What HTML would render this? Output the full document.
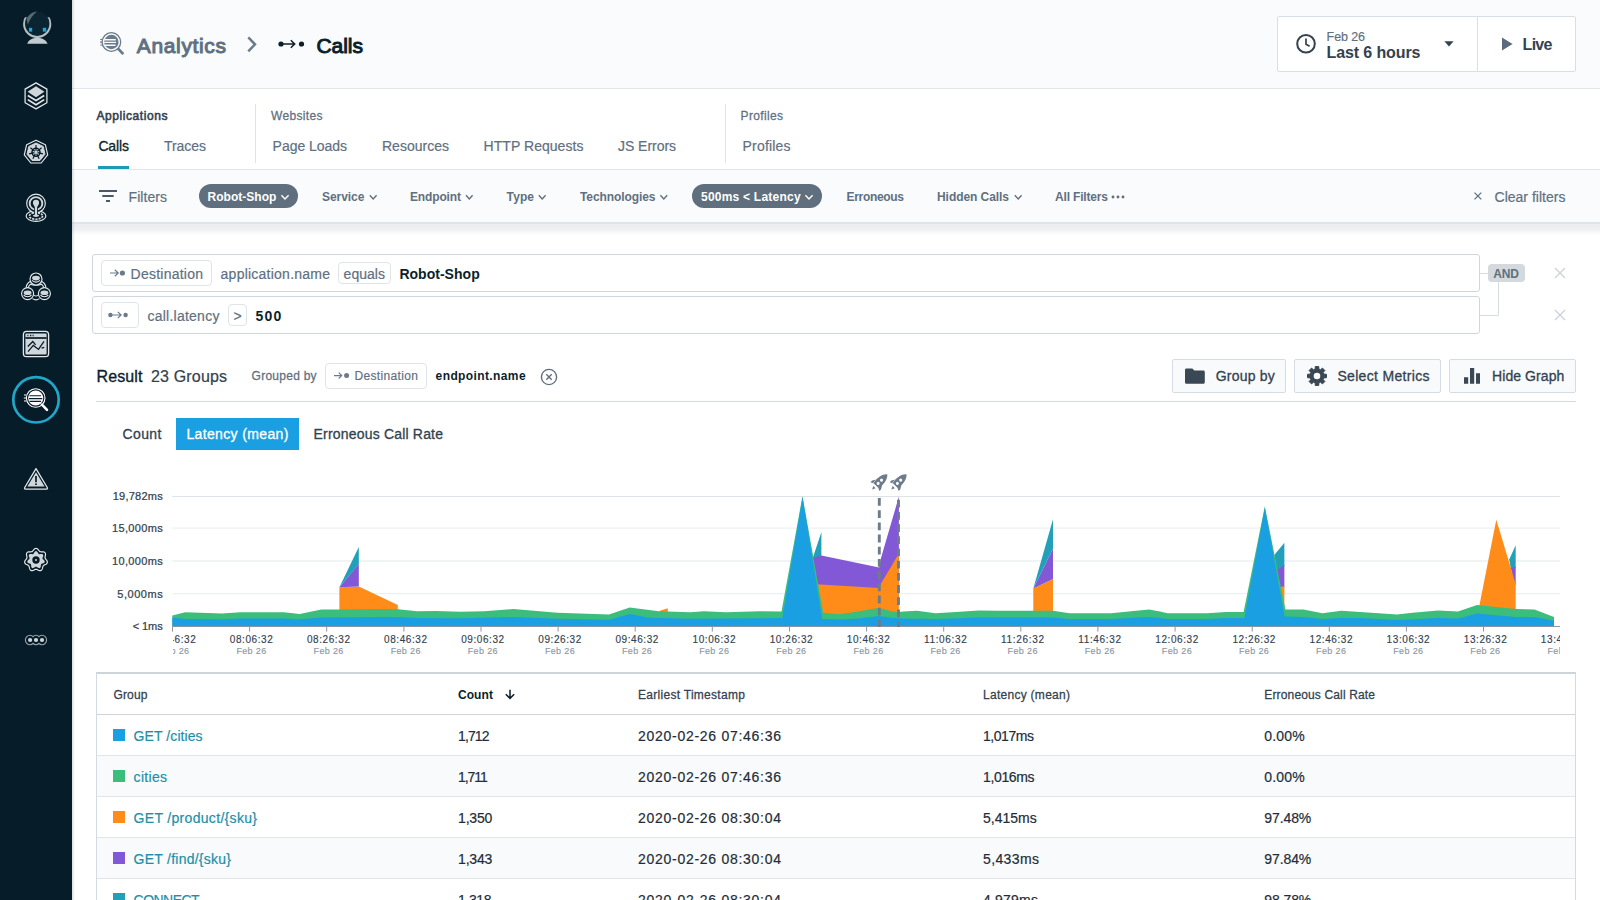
<!DOCTYPE html>
<html lang="en"><head><meta charset="utf-8"><title>Analytics - Calls</title>
<style>
html,body{margin:0;padding:0}
body{width:1600px;height:900px;overflow:hidden;position:relative;background:#fff;font-family:"Liberation Sans",Arial,sans-serif;}
.t{position:absolute;white-space:nowrap;}
.b{position:absolute;box-sizing:border-box;}
svg{position:absolute;overflow:visible}
</style></head><body>

<div class="b" style="left:72px;top:0;width:1528px;height:88px;background:#fafbfc;border-bottom:1px solid #e1e6ea;height:89px"></div>
<div class="b" style="left:72px;top:89px;width:1528px;height:81px;background:#fff;border-bottom:1px solid #e1e6ea"></div>
<div class="b" style="left:72px;top:224px;width:1528px;height:11px;background:linear-gradient(#eaedf0 0%,#eef0f2 50%,#fff 100%)"></div>
<div class="b" style="left:72px;top:170px;width:1528px;height:54px;background:#fafbfc;border-bottom:2px solid #dfe4e8"></div>
<div class="b" style="left:72px;top:0;width:3px;height:900px;background:linear-gradient(90deg,rgba(120,135,145,.28),rgba(120,135,145,0))"></div>
<div class="b" id="sidebar" style="left:0;top:0;width:72px;height:900px;background:#061d29"></div>
<svg style="left:0;top:0" width="72" height="900" viewBox="0 0 72 900">
<g>
<clipPath id="rc"><rect x="20" y="17.3" width="34" height="24"/></clipPath>
<circle cx="37.2" cy="24.100" r="14.100" fill="#b4bec5" clip-path="url(#rc)"/>
<circle cx="37.2" cy="23.700" r="12.200" fill="#0b2431"/>
<path d="M26.6 19C28.6 14.6 32.6 12 37 11.6C33 14.5 30.5 18.5 27.8 24.5Z" fill="#7b8993" opacity=".7"/>
<path d="M27.2 43.8C28.5 39.8 32 37.9 37.3 37.9C42.6 37.9 46 39.8 47.6 43.8Z" fill="#c3cbd0"/>
<rect x="29" y="27.8" width="3.2" height="3.8" fill="#1fa7d6"/><rect x="42.8" y="27.8" width="3.4" height="3.8" fill="#1fa7d6"/>
</g>
<g fill="none" stroke="#e3e8eb" stroke-width="1.25" stroke-linejoin="round">
<path d="M36 82.9L46.9 89.1V102.7L36 108.9L25.1 102.7V89.1Z"/>
<path d="M36 86.3L44.4 91.7L36 97.2L27.6 91.7Z" fill="#d0d6da" stroke="none"/>
<path d="M27.8 95.6L36 100.6L44.2 95.6" stroke-width="1.7"/>
<path d="M27.8 99.6L36 104.7L44.2 99.6" stroke-width="1.7"/>
</g>
<path d="M36.00 140.20 L45.38 144.72 L47.70 154.87 L41.21 163.01 L30.79 163.01 L24.30 154.87 L26.62 144.72Z" fill="none" stroke="#e3e8eb" stroke-width="1.15" stroke-linejoin="round"/>
<path d="M36.00 143.00 L43.19 146.46 L44.97 154.25 L39.99 160.49 L32.01 160.49 L27.03 154.25 L28.81 146.46Z" fill="#d0d6da" stroke="#d0d6da" stroke-width="1" stroke-linejoin="round"/>
<g stroke="#061d29" fill="none">
<circle cx="36" cy="152.3" r="4" stroke-width="1.5"/>
<path d="M36.00 150.70L36.00 145.10" stroke-width="1.2"/>
<path d="M37.25 151.30L41.63 147.81" stroke-width="1.2"/>
<path d="M37.56 152.66L43.02 153.90" stroke-width="1.2"/>
<path d="M36.69 153.74L39.12 158.79" stroke-width="1.2"/>
<path d="M35.31 153.74L32.88 158.79" stroke-width="1.2"/>
<path d="M34.44 152.66L28.98 153.90" stroke-width="1.2"/>
<path d="M34.75 151.30L30.37 147.81" stroke-width="1.2"/>
</g>
<g fill="none" stroke="#e3e8eb">
<ellipse cx="36" cy="216" rx="9.9" ry="5.4" stroke-width="1.15"/>
<ellipse cx="36" cy="216" rx="6.6" ry="3.3" stroke-width="1.7" stroke="#d0d6da" stroke-dasharray="2.2 1"/>
<circle cx="36" cy="203.4" r="9.3" stroke-width="1.15" fill="#061d29"/>
<circle cx="36" cy="203.4" r="6.3" stroke-width="1.9" stroke="#d0d6da"/>
<path d="M36 199.8a3.1 3.1 0 0 1 3.1 3.1c0 1.6-1.3 2.6-1.9 4.2L37 214.6c1.2.2 2 .6 2 1.1c0 .7-1.3 1.2-3 1.2s-3-.5-3-1.2c0-.5.8-.9 2-1.1L34.800 207.100c-.6-1.600-1.900-2.600-1.900-4.200a3.1 3.100 0 0 1 3.100-3.100z" fill="#d0d6da" stroke="#061d29" stroke-width="1.6" paint-order="stroke"/>
</g>
<g fill="none" stroke="#e3e8eb" stroke-width="1.15">
<path d="M30.2 281.5C27.5 283 26.3 284.5 26.2 287.6M41.8 281.5C44.5 283 45.7 284.5 45.8 287.6M32.5 298.6C34.5 300 37.5 300 39.5 298.6"/>
<path d="M30.5 284.2C33 285.6 39 285.6 41.5 284.2C44 286 43.6 288 43.3 288.4C41 289.5 39.2 291.5 38.800 294.500C37.500 296.500 34.500 296.500 33.200 294.500C32.800 291.500 31 289.500 28.700 288.400C28.400 288 28 286 30.500 284.200Z" stroke-width="1.1"/>
<circle cx="36" cy="279" r="6" fill="#061d29"/>
<ellipse cx="36" cy="278.1" rx="3.9" ry="2.3" fill="#d0d6da" stroke="none"/>
<path d="M32.1 280.3c1.5 2.4 6.300 2.400 7.800 0" stroke-width="1.1"/>
<circle cx="27.6" cy="293.6" r="6" fill="#061d29"/>
<ellipse cx="27.6" cy="292.7" rx="3.9" ry="2.3" fill="#d0d6da" stroke="none"/>
<path d="M23.7 294.9c1.5 2.4 6.300 2.400 7.800 0" stroke-width="1.1"/>
<circle cx="44.4" cy="293.6" r="6" fill="#061d29"/>
<ellipse cx="44.4" cy="292.7" rx="3.9" ry="2.3" fill="#d0d6da" stroke="none"/>
<path d="M40.5 294.9c1.5 2.4 6.300 2.400 7.800 0" stroke-width="1.1"/>
</g>
<rect x="23.4" y="331.4" width="25.2" height="25.2" rx="3.2" fill="none" stroke="#e3e8eb" stroke-width="1.3"/>
<rect x="25.4" y="333.4" width="21.2" height="21.200" rx="1" fill="#d0d6da"/>
<g stroke="#061d29" fill="none"><path d="M25.4 338H46.6" stroke-width="1.7"/><path d="M27.4 335.500h1M30 335.500h1.300M32.600 335.500h1" stroke-width="1.300"/><path d="M28 351.700L33.300 345.400L38.500 349.400L44 341.300" stroke-width="1.300"/><path d="M27.800 346.500L32.800 341.500L35.600 344.800" stroke-width="1.300"/><path d="M41.600 348.200L44.200 347.400" stroke-width="1.400"/></g>
<circle cx="36" cy="399.8" r="22.7" fill="none" stroke="#21a5c8" stroke-width="2.7"/>
<g><circle cx="35.700" cy="398" r="9.300" fill="none" stroke="#fff" stroke-width="1.100"/><circle cx="35.700" cy="398" r="7.600" fill="#fff"/>
<path d="M29.500 395.700H41M29 398.600H42.300M29.500 401.300H41" stroke="#061d29" stroke-width="1.150"/>
<path d="M24 395H26.200M23.800 398H26M24 401H26.200" stroke="#fff" stroke-width="1"/>
<path d="M42 404.700L47 409.800" stroke="#fff" stroke-width="2.600" stroke-linecap="round"/></g>
<path d="M36 468.600L47.400 487.800C47.700 488.400 47.300 489 46.700 489H25.300C24.700 489 24.300 488.400 24.600 487.800Z" fill="none" stroke="#e3e8eb" stroke-width="1.250" stroke-linejoin="round"/>
<path d="M36 472.300L44.600 486.600H27.400Z" fill="#d0d6da"/>
<path d="M36 476V482.200M36 483.600V485" stroke="#061d29" stroke-width="1.700"/>
<path d="M36.00 548.40L36.65 548.51L37.26 548.81L37.82 549.26L38.33 549.81L38.77 550.38L39.18 550.90L39.59 551.33L40.04 551.62L40.54 551.78L41.13 551.84L41.79 551.84L42.52 551.83L43.26 551.88L43.96 552.04L44.58 552.33L45.07 552.77L45.39 553.34L45.54 554.01L45.53 554.73L45.42 555.47L45.25 556.17L45.10 556.82L45.02 557.40L45.07 557.93L45.25 558.43L45.58 558.92L45.99 559.44L46.45 560.00L46.87 560.61L47.19 561.26L47.35 561.93L47.31 562.58L47.06 563.19L46.63 563.72L46.06 564.17L45.42 564.53L44.76 564.84L44.16 565.13L43.66 565.43L43.27 565.80L43.00 566.26L42.81 566.81L42.67 567.46L42.52 568.17L42.30 568.88L41.99 569.54L41.57 570.08L41.03 570.45L40.41 570.64L39.72 570.63L39.01 570.46L38.33 570.19L37.68 569.87L37.08 569.58L36.53 569.37L36.00 569.30L35.47 569.37L34.92 569.58L34.32 569.87L33.67 570.19L32.99 570.46L32.28 570.63L31.59 570.64L30.97 570.45L30.43 570.08L30.01 569.54L29.70 568.88L29.48 568.17L29.33 567.46L29.19 566.81L29.00 566.26L28.73 565.80L28.34 565.43L27.84 565.13L27.24 564.84L26.58 564.53L25.94 564.17L25.37 563.72L24.94 563.19L24.69 562.58L24.65 561.93L24.81 561.26L25.13 560.61L25.55 560.00L26.01 559.44L26.42 558.92L26.75 558.43L26.93 557.93L26.98 557.40L26.90 556.82L26.75 556.17L26.58 555.47L26.47 554.73L26.46 554.01L26.61 553.34L26.93 552.77L27.42 552.33L28.04 552.04L28.74 551.88L29.48 551.83L30.21 551.84L30.87 551.84L31.46 551.78L31.96 551.62L32.41 551.33L32.82 550.90L33.23 550.38L33.67 549.81L34.18 549.26L34.74 548.81L35.35 548.51Z" fill="none" stroke="#e3e8eb" stroke-width="1.150"/>
<path d="M36.00 551.10L36.49 551.20L36.96 551.49L37.37 551.93L37.72 552.44L38.02 552.98L38.29 553.45L38.56 553.82L38.86 554.05L39.23 554.15L39.69 554.13L40.23 554.04L40.83 553.94L41.46 553.89L42.06 553.94L42.57 554.13L42.96 554.45L43.19 554.90L43.25 555.44L43.17 556.04L42.98 556.64L42.75 557.20L42.55 557.71L42.43 558.15L42.43 558.53L42.59 558.88L42.89 559.22L43.30 559.59L43.75 560.00L44.18 560.46L44.51 560.96L44.69 561.48L44.68 561.98L44.47 562.44L44.08 562.83L43.57 563.13L42.98 563.36L42.40 563.54L41.87 563.69L41.45 563.87L41.16 564.12L40.99 564.46L40.91 564.91L40.87 565.45L40.83 566.06L40.74 566.68L40.56 567.25L40.26 567.71L39.86 568.02L39.37 568.14L38.83 568.08L38.27 567.87L37.72 567.56L37.22 567.21L36.78 566.89L36.37 566.68L36.00 566.60L35.63 566.68L35.22 566.89L34.78 567.21L34.28 567.56L33.73 567.87L33.17 568.08L32.63 568.14L32.14 568.02L31.74 567.71L31.44 567.25L31.26 566.68L31.17 566.06L31.13 565.45L31.09 564.91L31.01 564.46L30.84 564.12L30.55 563.87L30.13 563.69L29.60 563.54L29.02 563.36L28.43 563.13L27.92 562.83L27.53 562.44L27.32 561.98L27.31 561.48L27.49 560.96L27.82 560.46L28.25 560.00L28.70 559.59L29.11 559.22L29.41 558.88L29.57 558.53L29.57 558.15L29.45 557.71L29.25 557.20L29.02 556.64L28.83 556.04L28.75 555.44L28.81 554.90L29.04 554.45L29.43 554.13L29.94 553.94L30.54 553.89L31.17 553.94L31.77 554.04L32.31 554.13L32.77 554.15L33.14 554.05L33.44 553.82L33.71 553.45L33.98 552.98L34.28 552.44L34.63 551.93L35.04 551.49L35.51 551.20Z" fill="#d0d6da"/>
<circle cx="36" cy="560" r="3.700" fill="#061d29"/><circle cx="36" cy="560" r="1" fill="#d0d6da"/>
<g fill="none" stroke="#9aa6ae" stroke-width="1.100"><path d="M30.100 635.300a4.700 4.700 0 1 0 0 9.400c1.300 0 2.300-.5 2.950-1.300c.65.800 1.650 1.300 2.950 1.300s2.300-.5 2.950-1.300c.65.800 1.650 1.300 2.950 1.300a4.700 4.700 0 1 0 0-9.400c-1.300 0-2.300.5-2.950 1.300c-.65-.8-1.650-1.300-2.950-1.300s-2.300.5-2.950 1.300c-.65-.8-1.650-1.300-2.950-1.300z"/></g>
<circle cx="30.1" cy="640" r="2.100" fill="#d0d6da"/>
<circle cx="36" cy="640" r="2.100" fill="#d0d6da"/>
<circle cx="42" cy="640" r="2.100" fill="#d0d6da"/>
</svg>
<span class="t" style="left:136.80px;top:35.00px;font-size:21px;line-height:21px;color:#5f7080;-webkit-text-stroke:0.99px #5f7080;letter-spacing:0.646px;">Analytics</span>
<span class="t" style="left:316.50px;top:35.00px;font-size:21px;line-height:21px;color:#0b1f2b;-webkit-text-stroke:0.99px #0b1f2b;letter-spacing:-0.069px;">Calls</span>
<div class="b" style="left:1277px;top:16px;width:299px;height:56px;background:#fff;border:1px solid #d9e0e5;border-radius:2px"></div>
<div class="b" style="left:1477px;top:17px;width:1px;height:54px;background:#d9e0e5"></div>
<svg style="left:0;top:0" width="1600" height="90" viewBox="0 0 1600 90">
<g><circle cx="111.400" cy="42" r="9.300" fill="none" stroke="#6b7b8a" stroke-width="1.300"/><circle cx="111.400" cy="42" r="7.200" fill="#6b7b8a"/>
<path d="M104.600 39.700H115.800M104.200 42.400H116M104.600 45.200H115.500" stroke="#f9fafb" stroke-width="1.400"/>
<path d="M100.200 39.500H102.600M100 42.200H102.400M100.200 45H102.600" stroke="#6b7b8a" stroke-width="1.200"/>
<path d="M117.700 48.300L123.300 54.100" stroke="#6b7b8a" stroke-width="2.800"/></g>
<path d="M248.300 37.300L255 44.300L248.300 51.300" fill="none" stroke="#6b7b8a" stroke-width="2.500"/>
<g stroke="#0b1f2b" fill="#0b1f2b"><circle cx="281" cy="44" r="2.600" stroke="none"/><circle cx="301.500" cy="44" r="2.600" stroke="none"/><path d="M283 44H294.500M290.800 40.300L294.700 44L290.800 47.700" fill="none" stroke-width="1.500"/></g>
<circle cx="1306" cy="43.700" r="8.800" fill="none" stroke="#33424f" stroke-width="2"/><path d="M1306 38.500V44.200L1309.600 46.300" fill="none" stroke="#33424f" stroke-width="1.700"/>
<path d="M1444.400 41.200H1453.600L1449 46.500Z" fill="#33424f"/>
<path d="M1502 37.600L1512.600 44.100L1502 50.600Z" fill="#5b6b7b"/>
</svg>
<span class="t" style="left:1326.60px;top:31.00px;font-size:12.5px;line-height:12.5px;color:#5f7080;-webkit-text-stroke:0.18px #5f7080;letter-spacing:-0.103px;">Feb 26</span>
<span class="t" style="left:1326.60px;top:45.00px;font-size:16px;line-height:16px;color:#33424f;font-weight:700;letter-spacing:-0.121px;">Last 6 hours</span>
<span class="t" style="left:1522.60px;top:37.00px;font-size:16px;line-height:16px;color:#33424f;font-weight:700;letter-spacing:-0.739px;">Live</span>
<span class="t" style="left:96.40px;top:110.00px;font-size:12px;line-height:12px;color:#33424f;-webkit-text-stroke:0.56px #33424f;letter-spacing:0.572px;">Applications</span>
<span class="t" style="left:271.00px;top:110.00px;font-size:12px;line-height:12px;color:#5f7080;-webkit-text-stroke:0.26px #5f7080;letter-spacing:0.324px;">Websites</span>
<span class="t" style="left:740.60px;top:110.00px;font-size:12px;line-height:12px;color:#5f7080;-webkit-text-stroke:0.26px #5f7080;letter-spacing:0.341px;">Profiles</span>
<div class="b" style="left:255px;top:104px;width:1px;height:59px;background:#dfe4e8"></div>
<div class="b" style="left:725px;top:104px;width:1px;height:59px;background:#dfe4e8"></div>
<span class="t" style="left:98.40px;top:139.00px;font-size:14px;line-height:14px;color:#0b1f2b;-webkit-text-stroke:0.31px #0b1f2b;letter-spacing:-0.129px;">Calls</span>
<span class="t" style="left:164.00px;top:139.00px;font-size:14px;line-height:14px;color:#5f7080;-webkit-text-stroke:0.20px #5f7080;letter-spacing:-0.053px;">Traces</span>
<span class="t" style="left:272.60px;top:139.00px;font-size:14px;line-height:14px;color:#5f7080;-webkit-text-stroke:0.20px #5f7080;letter-spacing:-0.037px;">Page Loads</span>
<span class="t" style="left:382.00px;top:139.00px;font-size:14px;line-height:14px;color:#5f7080;-webkit-text-stroke:0.20px #5f7080;letter-spacing:0.010px;">Resources</span>
<span class="t" style="left:483.60px;top:139.00px;font-size:14px;line-height:14px;color:#5f7080;-webkit-text-stroke:0.20px #5f7080;letter-spacing:0.039px;">HTTP Requests</span>
<span class="t" style="left:618.00px;top:139.00px;font-size:14px;line-height:14px;color:#5f7080;-webkit-text-stroke:0.20px #5f7080;letter-spacing:-0.042px;">JS Errors</span>
<span class="t" style="left:742.60px;top:139.00px;font-size:14px;line-height:14px;color:#5f7080;-webkit-text-stroke:0.20px #5f7080;letter-spacing:0.188px;">Profiles</span>
<div class="b" style="left:98px;top:166px;width:31px;height:3px;background:#1c9ab8"></div>
<span class="t" style="left:128.60px;top:190.00px;font-size:14px;line-height:14px;color:#5f7080;-webkit-text-stroke:0.20px #5f7080;letter-spacing:0.048px;">Filters</span>
<div class="b" style="left:199px;top:184px;width:99px;height:24px;border-radius:12px;background:#5f6f7e"></div>
<div class="b" style="left:692px;top:184px;width:130px;height:24px;border-radius:12px;background:#5f6f7e"></div>
<svg style="left:0;top:170px" width="1600" height="60" viewBox="0 170 1600 60">
<path d="M99 191H117M102.300 196H113.700M106 201H110" stroke="#4a5a68" stroke-width="1.800" fill="none"/>
<path d="M281.4 195.200L285.0 199L288.6 195.200" fill="none" stroke="#fff" stroke-width="1.400"/>
<path d="M805.4 195.200L809.0 199L812.6 195.200" fill="none" stroke="#fff" stroke-width="1.400"/>
<path d="M369.8 195.200L373.2 199L376.6 195.200" fill="none" stroke="#5f7080" stroke-width="1.400"/>
<path d="M466.0 195.200L469.3 199L472.6 195.200" fill="none" stroke="#5f7080" stroke-width="1.400"/>
<path d="M538.8 195.200L542.2 199L545.6 195.200" fill="none" stroke="#5f7080" stroke-width="1.400"/>
<path d="M660.4 195.200L663.8 199L667.2 195.200" fill="none" stroke="#5f7080" stroke-width="1.400"/>
<path d="M1014.8 195.200L1018.2 199L1021.6 195.200" fill="none" stroke="#5f7080" stroke-width="1.400"/>
<circle cx="1113" cy="197" r="1.450" fill="#5f7080"/>
<circle cx="1118" cy="197" r="1.450" fill="#5f7080"/>
<circle cx="1123" cy="197" r="1.450" fill="#5f7080"/>
<path d="M1474.500 192.600L1481.300 199.400M1481.300 192.600L1474.500 199.400" stroke="#5f7080" stroke-width="1.300"/>
</svg>
<span class="t" style="left:207.60px;top:191.00px;font-size:12px;line-height:12px;color:#fff;font-weight:700;letter-spacing:0.017px;">Robot-Shop</span>
<span class="t" style="left:701.00px;top:191.00px;font-size:12px;line-height:12px;color:#fff;font-weight:700;letter-spacing:0.229px;">500ms &lt; Latency</span>
<span class="t" style="left:322.00px;top:191.00px;font-size:12px;line-height:12px;color:#5f7080;font-weight:700;letter-spacing:-0.051px;">Service</span>
<span class="t" style="left:410.00px;top:191.00px;font-size:12px;line-height:12px;color:#5f7080;font-weight:700;letter-spacing:-0.141px;">Endpoint</span>
<span class="t" style="left:506.60px;top:191.00px;font-size:12px;line-height:12px;color:#5f7080;font-weight:700;letter-spacing:0.094px;">Type</span>
<span class="t" style="left:580.00px;top:191.00px;font-size:12px;line-height:12px;color:#5f7080;font-weight:700;letter-spacing:-0.096px;">Technologies</span>
<span class="t" style="left:846.60px;top:191.00px;font-size:12px;line-height:12px;color:#5f7080;font-weight:700;letter-spacing:-0.327px;">Erroneous</span>
<span class="t" style="left:937.00px;top:191.00px;font-size:12px;line-height:12px;color:#5f7080;font-weight:700;letter-spacing:-0.062px;">Hidden Calls</span>
<span class="t" style="left:1055.00px;top:191.00px;font-size:12px;line-height:12px;color:#5f7080;font-weight:700;letter-spacing:-0.168px;">All Filters</span>
<span class="t" style="left:1494.50px;top:190.00px;font-size:14px;line-height:14px;color:#5f7080;-webkit-text-stroke:0.20px #5f7080;letter-spacing:0.017px;">Clear filters</span>
<div class="b" style="left:92px;top:254px;width:1388px;height:38px;border:1px solid #cfd7dd;border-radius:3px;background:#fff"></div>
<div class="b" style="left:92px;top:296px;width:1388px;height:38px;border:1px solid #cfd7dd;border-radius:3px;background:#fff"></div>
<div class="b" style="left:101px;top:260px;width:111px;height:26px;border:1px solid #dfe4e8;border-radius:4px"></div>
<div class="b" style="left:338px;top:262px;width:53px;height:22px;border:1px solid #dfe4e8;border-radius:4px"></div>
<div class="b" style="left:101px;top:302px;width:38px;height:26px;border:1px solid #dfe4e8;border-radius:4px"></div>
<div class="b" style="left:228px;top:304px;width:19px;height:22px;border:1px solid #dfe4e8;border-radius:4px"></div>
<span class="t" style="left:130.60px;top:267.00px;font-size:14px;line-height:14px;color:#5f7080;-webkit-text-stroke:0.20px #5f7080;letter-spacing:0.236px;">Destination</span>
<span class="t" style="left:220.60px;top:267.00px;font-size:14px;line-height:14px;color:#5f7080;-webkit-text-stroke:0.20px #5f7080;letter-spacing:0.237px;">application.name</span>
<span class="t" style="left:343.60px;top:267.00px;font-size:14px;line-height:14px;color:#5f7080;-webkit-text-stroke:0.20px #5f7080;letter-spacing:0.029px;">equals</span>
<span class="t" style="left:399.40px;top:267.00px;font-size:14px;line-height:14px;color:#0b1f2b;font-weight:700;letter-spacing:0.024px;">Robot-Shop</span>
<span class="t" style="left:147.40px;top:309.00px;font-size:14px;line-height:14px;color:#5f7080;-webkit-text-stroke:0.20px #5f7080;letter-spacing:0.250px;">call.latency</span>
<span class="t" style="left:233.40px;top:309.00px;font-size:14px;line-height:14px;color:#5f7080;-webkit-text-stroke:0.20px #5f7080;">&gt;</span>
<span class="t" style="left:255.40px;top:309.00px;font-size:14px;line-height:14px;color:#0b1f2b;font-weight:700;letter-spacing:1.321px;">500</span>
<div class="b" style="left:1488px;top:264px;width:37px;height:18px;border-radius:4px;background:#d3d9dd"></div>
<span class="t" style="left:1493.30px;top:268.00px;font-size:12px;line-height:12px;color:#5f7080;font-weight:700;letter-spacing:-0.149px;">AND</span>
<svg style="left:0;top:250px" width="1600" height="90" viewBox="0 250 1600 90">
<g stroke="#6b7b8a" fill="none" stroke-width="1.200"><path d="M110.0 273.0H118.0M114.8 269.8L118.2 273.0L114.8 276.2"/><circle cx="122.4" cy="273.0" r="2.600" fill="#6b7b8a" stroke="none"/></g>
<g stroke="#6b7b8a" fill="#6b7b8a"><circle cx="110.400" cy="315" r="2.200" stroke="none"/><circle cx="125.600" cy="315" r="2.200" stroke="none"/><path d="M112 315H121M117.800 311.900L121.100 315L117.800 318.100" fill="none" stroke-width="1.200"/></g>
<path d="M1480 273.500H1488M1498.500 282V315.500H1480" fill="none" stroke="#d5dde3" stroke-width="1"/>
<path d="M1555 268L1565 278M1565 268L1555 278" stroke="#cbd2d8" stroke-width="1.300"/>
<path d="M1555 310L1565 320M1565 310L1555 320" stroke="#cbd2d8" stroke-width="1.300"/>
</svg>
<span class="t" style="left:96.60px;top:369.00px;font-size:16px;line-height:16px;color:#0b1f2b;-webkit-text-stroke:0.35px #0b1f2b;letter-spacing:0.090px;">Result</span>
<span class="t" style="left:151.00px;top:369.00px;font-size:16px;line-height:16px;color:#33424f;-webkit-text-stroke:0.22px #33424f;letter-spacing:0.161px;">23 Groups</span>
<span class="t" style="left:251.60px;top:370.00px;font-size:12px;line-height:12px;color:#5f7080;-webkit-text-stroke:0.26px #5f7080;letter-spacing:0.255px;">Grouped by</span>
<div class="b" style="left:325px;top:363px;width:102px;height:26px;border:1px solid #dfe4e8;border-radius:4px"></div>
<span class="t" style="left:354.40px;top:370.00px;font-size:12px;line-height:12px;color:#5f7080;-webkit-text-stroke:0.17px #5f7080;letter-spacing:0.356px;">Destination</span>
<span class="t" style="left:435.60px;top:370.00px;font-size:12px;line-height:12px;color:#0b1f2b;font-weight:700;letter-spacing:0.389px;">endpoint.name</span>
<div class="b" style="left:1172px;top:359px;width:114px;height:34px;border:1px solid #d5dde3;border-radius:2px;background:#f9fafb"></div>
<div class="b" style="left:1294px;top:359px;width:147px;height:34px;border:1px solid #d5dde3;border-radius:2px;background:#f9fafb"></div>
<div class="b" style="left:1449px;top:359px;width:127px;height:34px;border:1px solid #d5dde3;border-radius:2px;background:#f9fafb"></div>
<span class="t" style="left:1215.80px;top:369.00px;font-size:14px;line-height:14px;color:#33424f;-webkit-text-stroke:0.31px #33424f;letter-spacing:0.188px;">Group by</span>
<span class="t" style="left:1337.40px;top:369.00px;font-size:14px;line-height:14px;color:#33424f;-webkit-text-stroke:0.31px #33424f;letter-spacing:0.322px;">Select Metrics</span>
<span class="t" style="left:1492.00px;top:369.00px;font-size:14px;line-height:14px;color:#33424f;-webkit-text-stroke:0.31px #33424f;letter-spacing:0.079px;">Hide Graph</span>
<div class="b" style="left:96px;top:401px;width:1480px;height:1px;background:#d3dbe0"></div>
<svg style="left:0;top:355px" width="1600" height="45" viewBox="0 355 1600 45">
<g stroke="#6b7b8a" fill="none" stroke-width="1.150"><path d="M334 375.600H341.600M338.700 372.700L341.800 375.600L338.700 378.500"/><circle cx="346.600" cy="375.600" r="2.500" fill="#6b7b8a" stroke="none"/></g>
<circle cx="549" cy="377" r="7.600" fill="none" stroke="#5f7080" stroke-width="1.400"/><path d="M546.300 374.300L551.700 379.700M551.700 374.300L546.300 379.700" stroke="#5f7080" stroke-width="1.400"/>
<path d="M1186.500 368.400H1192.300L1194.300 370.400H1203.300C1204.200 370.400 1204.800 371 1204.800 371.900V382.300C1204.800 383.200 1204.200 383.800 1203.300 383.800H1186.500C1185.600 383.800 1185 383.200 1185 382.300V369.900C1185 369 1185.600 368.400 1186.500 368.400Z" fill="#3a4754"/>
<path d="M1315.28 366.56L1318.72 366.56L1318.87 369.15L1320.52 369.83L1322.46 368.10L1324.90 370.54L1323.17 372.48L1323.85 374.13L1326.44 374.28L1326.44 377.72L1323.85 377.87L1323.17 379.52L1324.90 381.46L1322.46 383.90L1320.52 382.17L1318.87 382.85L1318.72 385.44L1315.28 385.44L1315.13 382.85L1313.48 382.17L1311.54 383.90L1309.10 381.46L1310.83 379.52L1310.15 377.87L1307.56 377.72L1307.56 374.28L1310.15 374.13L1310.83 372.48L1309.10 370.54L1311.54 368.10L1313.48 369.83L1315.13 369.15Z" fill="#3a4754" stroke="#3a4754" stroke-width="1" stroke-linejoin="round"/><circle cx="1317" cy="376" r="3.300" fill="#f9fafb"/>
<path d="M1464 377.300H1468.200V383.800H1464ZM1470 367.900H1474.200V383.800H1470ZM1476 373.300H1480V383.800H1476Z" fill="#3a4754"/>
</svg>
<div class="b" style="left:176px;top:418px;width:123px;height:32px;background:#1a9fe3"></div>
<span class="t" style="left:122.60px;top:427.00px;font-size:14px;line-height:14px;color:#33424f;-webkit-text-stroke:0.31px #33424f;letter-spacing:0.360px;">Count</span>
<span class="t" style="left:186.40px;top:427.00px;font-size:14px;line-height:14px;color:#fff;-webkit-text-stroke:0.31px #fff;letter-spacing:0.364px;">Latency (mean)</span>
<span class="t" style="left:313.60px;top:427.00px;font-size:14px;line-height:14px;color:#33424f;-webkit-text-stroke:0.31px #33424f;letter-spacing:0.185px;">Erroneous Call Rate</span>
<svg style="left:0;top:465px" width="1600" height="175" viewBox="0 465 1600 175">
<path d="M172.300 496.500H1560" stroke="#dde3e8" stroke-width="1.200"/>
<path d="M172.300 528.2H1560" stroke="#edf0f2" stroke-width="1.300"/>
<path d="M172.300 561H1560" stroke="#edf0f2" stroke-width="1.300"/>
<path d="M172.300 593.7H1560" stroke="#edf0f2" stroke-width="1.300"/>
<path d="M339.4 611.0L339.4 587.3L358.8 586.5L397.8 605.0L397.8 611.0 Z" fill="#ff8b19"/>
<path d="M339.4 587.3L358.8 563.8L358.8 586.6 Z" fill="#8258d7"/>
<path d="M339.4 587.3L358.8 547.0L358.8 563.9 Z" fill="#23a0b9"/>
<path d="M659.7 612.5L659.7 610.7L667.8 608.3L667.8 612.5 Z" fill="#ff8b19"/>
<path d="M806.0 560.0L812.9 557.5L821.4 532.0L821.4 556.5L806.0 561.0 Z" fill="#23a0b9"/>
<path d="M808.0 558.6L812.5 558.0L821.4 555.6L879.2 567.5L881.0 558.0L898.9 496.6L898.9 600.0L808.0 600.0 Z" fill="#8258d7"/>
<path d="M808.0 584.2L816.5 584.2L879.2 588.0L881.0 583.6L898.9 553.4L898.9 614.0L808.0 616.0 Z" fill="#ff8b19"/>
<path d="M1033.3 612.0L1033.3 588.5L1053.0 579.0L1053.0 612.0 Z" fill="#ff8b19"/>
<path d="M1033.3 588.5L1053.0 548.5L1053.0 579.1 Z" fill="#8258d7"/>
<path d="M1033.3 588.5L1053.0 519.2L1053.0 548.6 Z" fill="#23a0b9"/>
<path d="M1274.3 555.0L1284.4 542.8L1284.4 566.0L1277.0 572.0 Z" fill="#23a0b9"/>
<path d="M1276.5 570.5L1284.4 565.0L1284.4 587.0L1280.0 589.0 Z" fill="#8258d7"/>
<path d="M1279.5 587.5L1284.4 586.0L1284.4 606.0L1282.0 606.0 Z" fill="#ff8b19"/>
<path d="M1509.2 559.4L1515.7 545.3L1515.7 568.0L1511.0 570.0 Z" fill="#23a0b9"/>
<path d="M1511.0 567.8L1515.7 567.0L1515.7 585.0L1514.0 585.0 Z" fill="#8258d7"/>
<path d="M1479.3 606.0L1496.3 519.8L1515.7 584.0L1515.7 611.0L1479.3 611.0 Z" fill="#ff8b19"/>
<path d="M172.3 626.3L172.3 615.4L185.3 612.2L221.9 613.5L240.6 612.2L283.8 612.2L299.7 613.9L321.3 609.4L339.0 609.4L381.0 609.0L398.0 609.2L417.0 611.3L435.6 611.0L460.0 611.7L484.4 611.3L513.4 609.0L557.5 612.8L609.0 614.6L629.7 607.5L658.8 611.2L690.6 612.2L703.8 611.2L726.0 612.2L760.0 611.3L781.5 611.4L802.5 496.0L823.2 612.7L839.3 614.2L858.2 611.4L879.0 607.8L892.2 611.4L898.4 612.0L903.5 611.4L916.8 610.8L935.6 613.2L960.0 611.7L978.9 610.4L997.8 610.8L1033.0 610.8L1053.0 610.8L1069.5 613.2L1111.0 613.2L1148.9 609.5L1160.0 611.4L1167.5 613.2L1207.2 613.2L1226.0 612.0L1243.6 612.0L1264.8 506.3L1285.4 609.5L1303.5 609.5L1322.4 613.2L1341.3 610.8L1360.0 612.0L1397.0 614.5L1412.5 612.8L1438.0 610.4L1458.0 611.5L1477.0 605.0L1496.0 607.0L1515.6 609.0L1534.5 609.5L1554.0 617.0L1554.0 626.3Z" fill="#3bbd7c"/>
<path d="M172.3 626.3L172.3 617.8L185.3 619.0L221.9 619.3L240.6 618.5L283.8 618.4L299.7 619.3L321.3 617.4L381.0 617.0L398.0 617.0L417.0 618.0L460.0 618.3L513.4 616.9L557.5 618.8L609.0 619.7L629.7 614.0L649.4 617.8L690.6 618.8L760.0 618.3L782.3 618.0L802.5 497.2L822.3 619.0L839.3 619.5L858.2 618.5L879.0 616.0L892.2 618.0L903.5 618.4L935.6 619.0L960.0 618.2L978.9 617.6L1053.0 617.6L1069.5 619.0L1111.0 619.0L1148.9 617.0L1160.0 618.0L1167.5 619.0L1207.2 619.0L1226.0 618.0L1244.4 618.0L1264.8 507.8L1284.6 616.6L1303.5 617.0L1322.4 619.0L1341.3 618.0L1360.0 618.0L1397.0 619.9L1438.0 618.0L1458.0 618.5L1477.0 613.5L1515.6 617.0L1534.5 617.0L1554.0 620.8L1554.0 626.3Z" fill="#1a9fe3"/>
<path d="M172.300 626.500H1560" stroke="#8a97a3" stroke-width="1.100"/>
<path d="M172.5 626.500V631.600" stroke="#8a97a3" stroke-width="1"/>
<path d="M249.6 626.500V631.600" stroke="#8a97a3" stroke-width="1"/>
<path d="M326.7 626.500V631.600" stroke="#8a97a3" stroke-width="1"/>
<path d="M403.9 626.500V631.600" stroke="#8a97a3" stroke-width="1"/>
<path d="M481.0 626.500V631.600" stroke="#8a97a3" stroke-width="1"/>
<path d="M558.1 626.500V631.600" stroke="#8a97a3" stroke-width="1"/>
<path d="M635.2 626.500V631.600" stroke="#8a97a3" stroke-width="1"/>
<path d="M712.3 626.500V631.600" stroke="#8a97a3" stroke-width="1"/>
<path d="M789.5 626.500V631.600" stroke="#8a97a3" stroke-width="1"/>
<path d="M866.6 626.500V631.600" stroke="#8a97a3" stroke-width="1"/>
<path d="M943.7 626.500V631.600" stroke="#8a97a3" stroke-width="1"/>
<path d="M1020.8 626.500V631.600" stroke="#8a97a3" stroke-width="1"/>
<path d="M1097.9 626.500V631.600" stroke="#8a97a3" stroke-width="1"/>
<path d="M1175.1 626.500V631.600" stroke="#8a97a3" stroke-width="1"/>
<path d="M1252.2 626.500V631.600" stroke="#8a97a3" stroke-width="1"/>
<path d="M1329.3 626.500V631.600" stroke="#8a97a3" stroke-width="1"/>
<path d="M1406.4 626.500V631.600" stroke="#8a97a3" stroke-width="1"/>
<path d="M1483.5 626.500V631.600" stroke="#8a97a3" stroke-width="1"/>
<path d="M879.3 498.0V627" stroke="#6d7c8a" stroke-width="2.900" stroke-dasharray="7.800 4.400"/>
<g transform="translate(879.6 482) rotate(45)"><path d="M0 -10.900C3.700 -7.800 4.600 -2.500 4.100 5H-4.100C-4.600 -2.500 -3.700 -7.800 0 -10.900ZM4.100 0.500L6.300 4.300V6.600L3.600 5.300ZM-4.100 0.500L-6.300 4.300V6.600L-3.600 5.300ZM-1.700 7.200L0 10.600L1.700 7.200Z" fill="#6d7c8a"/><circle cx="0" cy="-2.700" r="1.500" fill="#fff"/><circle cx="0" cy="2" r="1.500" fill="#fff"/></g>
<path d="M898.5 499.7V627" stroke="#6d7c8a" stroke-width="2.900" stroke-dasharray="7.800 4.400"/>
<g transform="translate(898.8 482) rotate(45)"><path d="M0 -10.900C3.700 -7.800 4.600 -2.500 4.100 5H-4.100C-4.600 -2.500 -3.700 -7.800 0 -10.900ZM4.100 0.500L6.300 4.300V6.600L3.600 5.300ZM-4.100 0.500L-6.300 4.300V6.600L-3.600 5.300ZM-1.700 7.200L0 10.600L1.700 7.200Z" fill="#6d7c8a"/><circle cx="0" cy="-2.700" r="1.500" fill="#fff"/><circle cx="0" cy="2" r="1.500" fill="#fff"/></g>
</svg>
<span class="t" style="left:112.70px;top:491.00px;font-size:11px;line-height:11px;color:#33424f;-webkit-text-stroke:0.24px #33424f;letter-spacing:0.242px;">19,782ms</span>
<span class="t" style="left:112.00px;top:523.00px;font-size:11px;line-height:11px;color:#33424f;-webkit-text-stroke:0.24px #33424f;letter-spacing:0.342px;">15,000ms</span>
<span class="t" style="left:112.00px;top:556.00px;font-size:11px;line-height:11px;color:#33424f;-webkit-text-stroke:0.24px #33424f;letter-spacing:0.342px;">10,000ms</span>
<span class="t" style="left:117.30px;top:589.00px;font-size:11px;line-height:11px;color:#33424f;-webkit-text-stroke:0.24px #33424f;letter-spacing:0.535px;">5,000ms</span>
<span class="t" style="left:132.70px;top:621.00px;font-size:11px;line-height:11px;color:#33424f;-webkit-text-stroke:0.24px #33424f;letter-spacing:-0.065px;">&lt; 1ms</span>
<div class="b" style="left:172.5px;top:630px;width:1387.5px;height:30px;overflow:hidden">
<span class="t" style="left:-19.80px;top:5.00px;font-size:10px;line-height:10px;color:#33424f;-webkit-text-stroke:0.14px #33424f;letter-spacing:0.582px;">07:46:32</span>
<span class="t" style="left:-13.20px;top:17.00px;font-size:9px;line-height:9px;color:#8a97a3;-webkit-text-stroke:0.13px #8a97a3;letter-spacing:0.356px;">Feb 26</span>
<span class="t" style="left:57.32px;top:5.00px;font-size:10px;line-height:10px;color:#33424f;-webkit-text-stroke:0.14px #33424f;letter-spacing:0.582px;">08:06:32</span>
<span class="t" style="left:63.92px;top:17.00px;font-size:9px;line-height:9px;color:#8a97a3;-webkit-text-stroke:0.13px #8a97a3;letter-spacing:0.356px;">Feb 26</span>
<span class="t" style="left:134.44px;top:5.00px;font-size:10px;line-height:10px;color:#33424f;-webkit-text-stroke:0.14px #33424f;letter-spacing:0.582px;">08:26:32</span>
<span class="t" style="left:141.04px;top:17.00px;font-size:9px;line-height:9px;color:#8a97a3;-webkit-text-stroke:0.13px #8a97a3;letter-spacing:0.356px;">Feb 26</span>
<span class="t" style="left:211.56px;top:5.00px;font-size:10px;line-height:10px;color:#33424f;-webkit-text-stroke:0.14px #33424f;letter-spacing:0.582px;">08:46:32</span>
<span class="t" style="left:218.16px;top:17.00px;font-size:9px;line-height:9px;color:#8a97a3;-webkit-text-stroke:0.13px #8a97a3;letter-spacing:0.356px;">Feb 26</span>
<span class="t" style="left:288.68px;top:5.00px;font-size:10px;line-height:10px;color:#33424f;-webkit-text-stroke:0.14px #33424f;letter-spacing:0.582px;">09:06:32</span>
<span class="t" style="left:295.28px;top:17.00px;font-size:9px;line-height:9px;color:#8a97a3;-webkit-text-stroke:0.13px #8a97a3;letter-spacing:0.356px;">Feb 26</span>
<span class="t" style="left:365.80px;top:5.00px;font-size:10px;line-height:10px;color:#33424f;-webkit-text-stroke:0.14px #33424f;letter-spacing:0.582px;">09:26:32</span>
<span class="t" style="left:372.40px;top:17.00px;font-size:9px;line-height:9px;color:#8a97a3;-webkit-text-stroke:0.13px #8a97a3;letter-spacing:0.356px;">Feb 26</span>
<span class="t" style="left:442.92px;top:5.00px;font-size:10px;line-height:10px;color:#33424f;-webkit-text-stroke:0.14px #33424f;letter-spacing:0.582px;">09:46:32</span>
<span class="t" style="left:449.52px;top:17.00px;font-size:9px;line-height:9px;color:#8a97a3;-webkit-text-stroke:0.13px #8a97a3;letter-spacing:0.356px;">Feb 26</span>
<span class="t" style="left:520.04px;top:5.00px;font-size:10px;line-height:10px;color:#33424f;-webkit-text-stroke:0.14px #33424f;letter-spacing:0.582px;">10:06:32</span>
<span class="t" style="left:526.64px;top:17.00px;font-size:9px;line-height:9px;color:#8a97a3;-webkit-text-stroke:0.13px #8a97a3;letter-spacing:0.356px;">Feb 26</span>
<span class="t" style="left:597.16px;top:5.00px;font-size:10px;line-height:10px;color:#33424f;-webkit-text-stroke:0.14px #33424f;letter-spacing:0.582px;">10:26:32</span>
<span class="t" style="left:603.76px;top:17.00px;font-size:9px;line-height:9px;color:#8a97a3;-webkit-text-stroke:0.13px #8a97a3;letter-spacing:0.356px;">Feb 26</span>
<span class="t" style="left:674.28px;top:5.00px;font-size:10px;line-height:10px;color:#33424f;-webkit-text-stroke:0.14px #33424f;letter-spacing:0.582px;">10:46:32</span>
<span class="t" style="left:680.88px;top:17.00px;font-size:9px;line-height:9px;color:#8a97a3;-webkit-text-stroke:0.13px #8a97a3;letter-spacing:0.356px;">Feb 26</span>
<span class="t" style="left:751.40px;top:5.00px;font-size:10px;line-height:10px;color:#33424f;-webkit-text-stroke:0.14px #33424f;letter-spacing:0.688px;">11:06:32</span>
<span class="t" style="left:758.00px;top:17.00px;font-size:9px;line-height:9px;color:#8a97a3;-webkit-text-stroke:0.13px #8a97a3;letter-spacing:0.356px;">Feb 26</span>
<span class="t" style="left:828.52px;top:5.00px;font-size:10px;line-height:10px;color:#33424f;-webkit-text-stroke:0.14px #33424f;letter-spacing:0.688px;">11:26:32</span>
<span class="t" style="left:835.12px;top:17.00px;font-size:9px;line-height:9px;color:#8a97a3;-webkit-text-stroke:0.13px #8a97a3;letter-spacing:0.356px;">Feb 26</span>
<span class="t" style="left:905.64px;top:5.00px;font-size:10px;line-height:10px;color:#33424f;-webkit-text-stroke:0.14px #33424f;letter-spacing:0.688px;">11:46:32</span>
<span class="t" style="left:912.24px;top:17.00px;font-size:9px;line-height:9px;color:#8a97a3;-webkit-text-stroke:0.13px #8a97a3;letter-spacing:0.356px;">Feb 26</span>
<span class="t" style="left:982.76px;top:5.00px;font-size:10px;line-height:10px;color:#33424f;-webkit-text-stroke:0.14px #33424f;letter-spacing:0.582px;">12:06:32</span>
<span class="t" style="left:989.36px;top:17.00px;font-size:9px;line-height:9px;color:#8a97a3;-webkit-text-stroke:0.13px #8a97a3;letter-spacing:0.356px;">Feb 26</span>
<span class="t" style="left:1059.88px;top:5.00px;font-size:10px;line-height:10px;color:#33424f;-webkit-text-stroke:0.14px #33424f;letter-spacing:0.582px;">12:26:32</span>
<span class="t" style="left:1066.48px;top:17.00px;font-size:9px;line-height:9px;color:#8a97a3;-webkit-text-stroke:0.13px #8a97a3;letter-spacing:0.356px;">Feb 26</span>
<span class="t" style="left:1137.00px;top:5.00px;font-size:10px;line-height:10px;color:#33424f;-webkit-text-stroke:0.14px #33424f;letter-spacing:0.582px;">12:46:32</span>
<span class="t" style="left:1143.60px;top:17.00px;font-size:9px;line-height:9px;color:#8a97a3;-webkit-text-stroke:0.13px #8a97a3;letter-spacing:0.356px;">Feb 26</span>
<span class="t" style="left:1214.12px;top:5.00px;font-size:10px;line-height:10px;color:#33424f;-webkit-text-stroke:0.14px #33424f;letter-spacing:0.582px;">13:06:32</span>
<span class="t" style="left:1220.72px;top:17.00px;font-size:9px;line-height:9px;color:#8a97a3;-webkit-text-stroke:0.13px #8a97a3;letter-spacing:0.356px;">Feb 26</span>
<span class="t" style="left:1291.24px;top:5.00px;font-size:10px;line-height:10px;color:#33424f;-webkit-text-stroke:0.14px #33424f;letter-spacing:0.582px;">13:26:32</span>
<span class="t" style="left:1297.84px;top:17.00px;font-size:9px;line-height:9px;color:#8a97a3;-webkit-text-stroke:0.13px #8a97a3;letter-spacing:0.356px;">Feb 26</span>
<span class="t" style="left:1368.36px;top:5.00px;font-size:10px;line-height:10px;color:#33424f;-webkit-text-stroke:0.14px #33424f;letter-spacing:0.582px;">13:46:32</span>
<span class="t" style="left:1374.96px;top:17.00px;font-size:9px;line-height:9px;color:#8a97a3;-webkit-text-stroke:0.13px #8a97a3;letter-spacing:0.356px;">Feb 26</span>
</div>
<div class="b" style="left:96px;top:672px;width:1480px;height:240px;border:1px solid #d3dbe0;border-top:2px solid #cdd5db;background:#fff"></div>
<div class="b" style="left:97px;top:714px;width:1478px;height:1px;background:#cdd5db"></div>
<div class="b" style="left:97px;top:755px;width:1478px;height:1px;background:#e1e6ea"></div>
<div class="b" style="left:97px;top:756px;width:1478px;height:40px;background:#f9fafb"></div>
<div class="b" style="left:97px;top:796px;width:1478px;height:1px;background:#e1e6ea"></div>
<div class="b" style="left:97px;top:837px;width:1478px;height:1px;background:#e1e6ea"></div>
<div class="b" style="left:97px;top:838px;width:1478px;height:40px;background:#f9fafb"></div>
<div class="b" style="left:97px;top:878px;width:1478px;height:1px;background:#e1e6ea"></div>
<div class="b" style="left:97px;top:919px;width:1478px;height:1px;background:#e1e6ea"></div>
<span class="t" style="left:113.40px;top:689.00px;font-size:12px;line-height:12px;color:#33424f;-webkit-text-stroke:0.26px #33424f;letter-spacing:0.162px;">Group</span>
<span class="t" style="left:458.00px;top:689.00px;font-size:12px;line-height:12px;color:#0b1f2b;font-weight:700;letter-spacing:0.062px;">Count</span>
<span class="t" style="left:638.00px;top:689.00px;font-size:12px;line-height:12px;color:#33424f;-webkit-text-stroke:0.26px #33424f;letter-spacing:0.286px;">Earliest Timestamp</span>
<span class="t" style="left:983.00px;top:689.00px;font-size:12px;line-height:12px;color:#33424f;-webkit-text-stroke:0.26px #33424f;letter-spacing:0.279px;">Latency (mean)</span>
<span class="t" style="left:1264.30px;top:689.00px;font-size:12px;line-height:12px;color:#33424f;-webkit-text-stroke:0.26px #33424f;letter-spacing:0.147px;">Erroneous Call Rate</span>
<svg style="left:504px;top:688px" width="12" height="12" viewBox="0 0 12 12"><path d="M6 1.700V10.200M1.800 6.200L6 10.400L10.200 6.200" fill="none" stroke="#0b1f2b" stroke-width="1.500"/></svg>
<div class="b" style="left:113px;top:729px;width:12px;height:12px;background:#1a9fe3"></div>
<span class="t" style="left:133.60px;top:729.00px;font-size:14px;line-height:14px;color:#1d8fa8;-webkit-text-stroke:0.20px #1d8fa8;letter-spacing:0.080px;">GET /cities</span>
<span class="t" style="left:458.00px;top:729.00px;font-size:14px;line-height:14px;color:#1f2d38;-webkit-text-stroke:0.20px #1f2d38;letter-spacing:-0.884px;">1,712</span>
<span class="t" style="left:638.00px;top:729.00px;font-size:14px;line-height:14px;color:#1f2d38;-webkit-text-stroke:0.20px #1f2d38;letter-spacing:0.722px;">2020-02-26 07:46:36</span>
<span class="t" style="left:983.00px;top:729.00px;font-size:14px;line-height:14px;color:#1f2d38;-webkit-text-stroke:0.20px #1f2d38;letter-spacing:-0.449px;">1,017ms</span>
<span class="t" style="left:1264.30px;top:729.00px;font-size:14px;line-height:14px;color:#1f2d38;-webkit-text-stroke:0.20px #1f2d38;letter-spacing:0.151px;">0.00%</span>
<div class="b" style="left:113px;top:770px;width:12px;height:12px;background:#3bbd7c"></div>
<span class="t" style="left:133.60px;top:770.00px;font-size:14px;line-height:14px;color:#1d8fa8;-webkit-text-stroke:0.20px #1d8fa8;letter-spacing:0.301px;">cities</span>
<span class="t" style="left:458.00px;top:770.00px;font-size:14px;line-height:14px;color:#1f2d38;-webkit-text-stroke:0.20px #1f2d38;letter-spacing:-1.049px;">1,711</span>
<span class="t" style="left:638.00px;top:770.00px;font-size:14px;line-height:14px;color:#1f2d38;-webkit-text-stroke:0.20px #1f2d38;letter-spacing:0.722px;">2020-02-26 07:46:36</span>
<span class="t" style="left:983.00px;top:770.00px;font-size:14px;line-height:14px;color:#1f2d38;-webkit-text-stroke:0.20px #1f2d38;letter-spacing:-0.349px;">1,016ms</span>
<span class="t" style="left:1264.30px;top:770.00px;font-size:14px;line-height:14px;color:#1f2d38;-webkit-text-stroke:0.20px #1f2d38;letter-spacing:0.151px;">0.00%</span>
<div class="b" style="left:113px;top:811px;width:12px;height:12px;background:#ff8b19"></div>
<span class="t" style="left:133.60px;top:811.00px;font-size:14px;line-height:14px;color:#1d8fa8;-webkit-text-stroke:0.20px #1d8fa8;letter-spacing:0.316px;">GET /product/{sku}</span>
<span class="t" style="left:458.00px;top:811.00px;font-size:14px;line-height:14px;color:#1f2d38;-webkit-text-stroke:0.20px #1f2d38;letter-spacing:-0.159px;">1,350</span>
<span class="t" style="left:638.00px;top:811.00px;font-size:14px;line-height:14px;color:#1f2d38;-webkit-text-stroke:0.20px #1f2d38;letter-spacing:0.722px;">2020-02-26 08:30:04</span>
<span class="t" style="left:983.00px;top:811.00px;font-size:14px;line-height:14px;color:#1f2d38;-webkit-text-stroke:0.20px #1f2d38;letter-spacing:0.017px;">5,415ms</span>
<span class="t" style="left:1264.30px;top:811.00px;font-size:14px;line-height:14px;color:#1f2d38;-webkit-text-stroke:0.20px #1f2d38;letter-spacing:-0.097px;">97.48%</span>
<div class="b" style="left:113px;top:852px;width:12px;height:12px;background:#8258d7"></div>
<span class="t" style="left:133.60px;top:852.00px;font-size:14px;line-height:14px;color:#1d8fa8;-webkit-text-stroke:0.20px #1d8fa8;letter-spacing:0.250px;">GET /find/{sku}</span>
<span class="t" style="left:458.00px;top:852.00px;font-size:14px;line-height:14px;color:#1f2d38;-webkit-text-stroke:0.20px #1f2d38;letter-spacing:-0.159px;">1,343</span>
<span class="t" style="left:638.00px;top:852.00px;font-size:14px;line-height:14px;color:#1f2d38;-webkit-text-stroke:0.20px #1f2d38;letter-spacing:0.722px;">2020-02-26 08:30:04</span>
<span class="t" style="left:983.00px;top:852.00px;font-size:14px;line-height:14px;color:#1f2d38;-webkit-text-stroke:0.20px #1f2d38;letter-spacing:0.384px;">5,433ms</span>
<span class="t" style="left:1264.30px;top:852.00px;font-size:14px;line-height:14px;color:#1f2d38;-webkit-text-stroke:0.20px #1f2d38;letter-spacing:-0.097px;">97.84%</span>
<div class="b" style="left:113px;top:893px;width:12px;height:12px;background:#23a0b9"></div>
<span class="t" style="left:133.60px;top:893.00px;font-size:14px;line-height:14px;color:#1d8fa8;-webkit-text-stroke:0.20px #1d8fa8;letter-spacing:-0.537px;">CONNECT</span>
<span class="t" style="left:458.00px;top:893.00px;font-size:14px;line-height:14px;color:#1f2d38;-webkit-text-stroke:0.20px #1f2d38;letter-spacing:-0.384px;">1,318</span>
<span class="t" style="left:638.00px;top:893.00px;font-size:14px;line-height:14px;color:#1f2d38;-webkit-text-stroke:0.20px #1f2d38;letter-spacing:0.722px;">2020-02-26 08:30:04</span>
<span class="t" style="left:983.00px;top:893.00px;font-size:14px;line-height:14px;color:#1f2d38;-webkit-text-stroke:0.20px #1f2d38;letter-spacing:0.217px;">4,979ms</span>
<span class="t" style="left:1264.30px;top:893.00px;font-size:14px;line-height:14px;color:#1f2d38;-webkit-text-stroke:0.20px #1f2d38;letter-spacing:-0.097px;">98.78%</span>
</body></html>
